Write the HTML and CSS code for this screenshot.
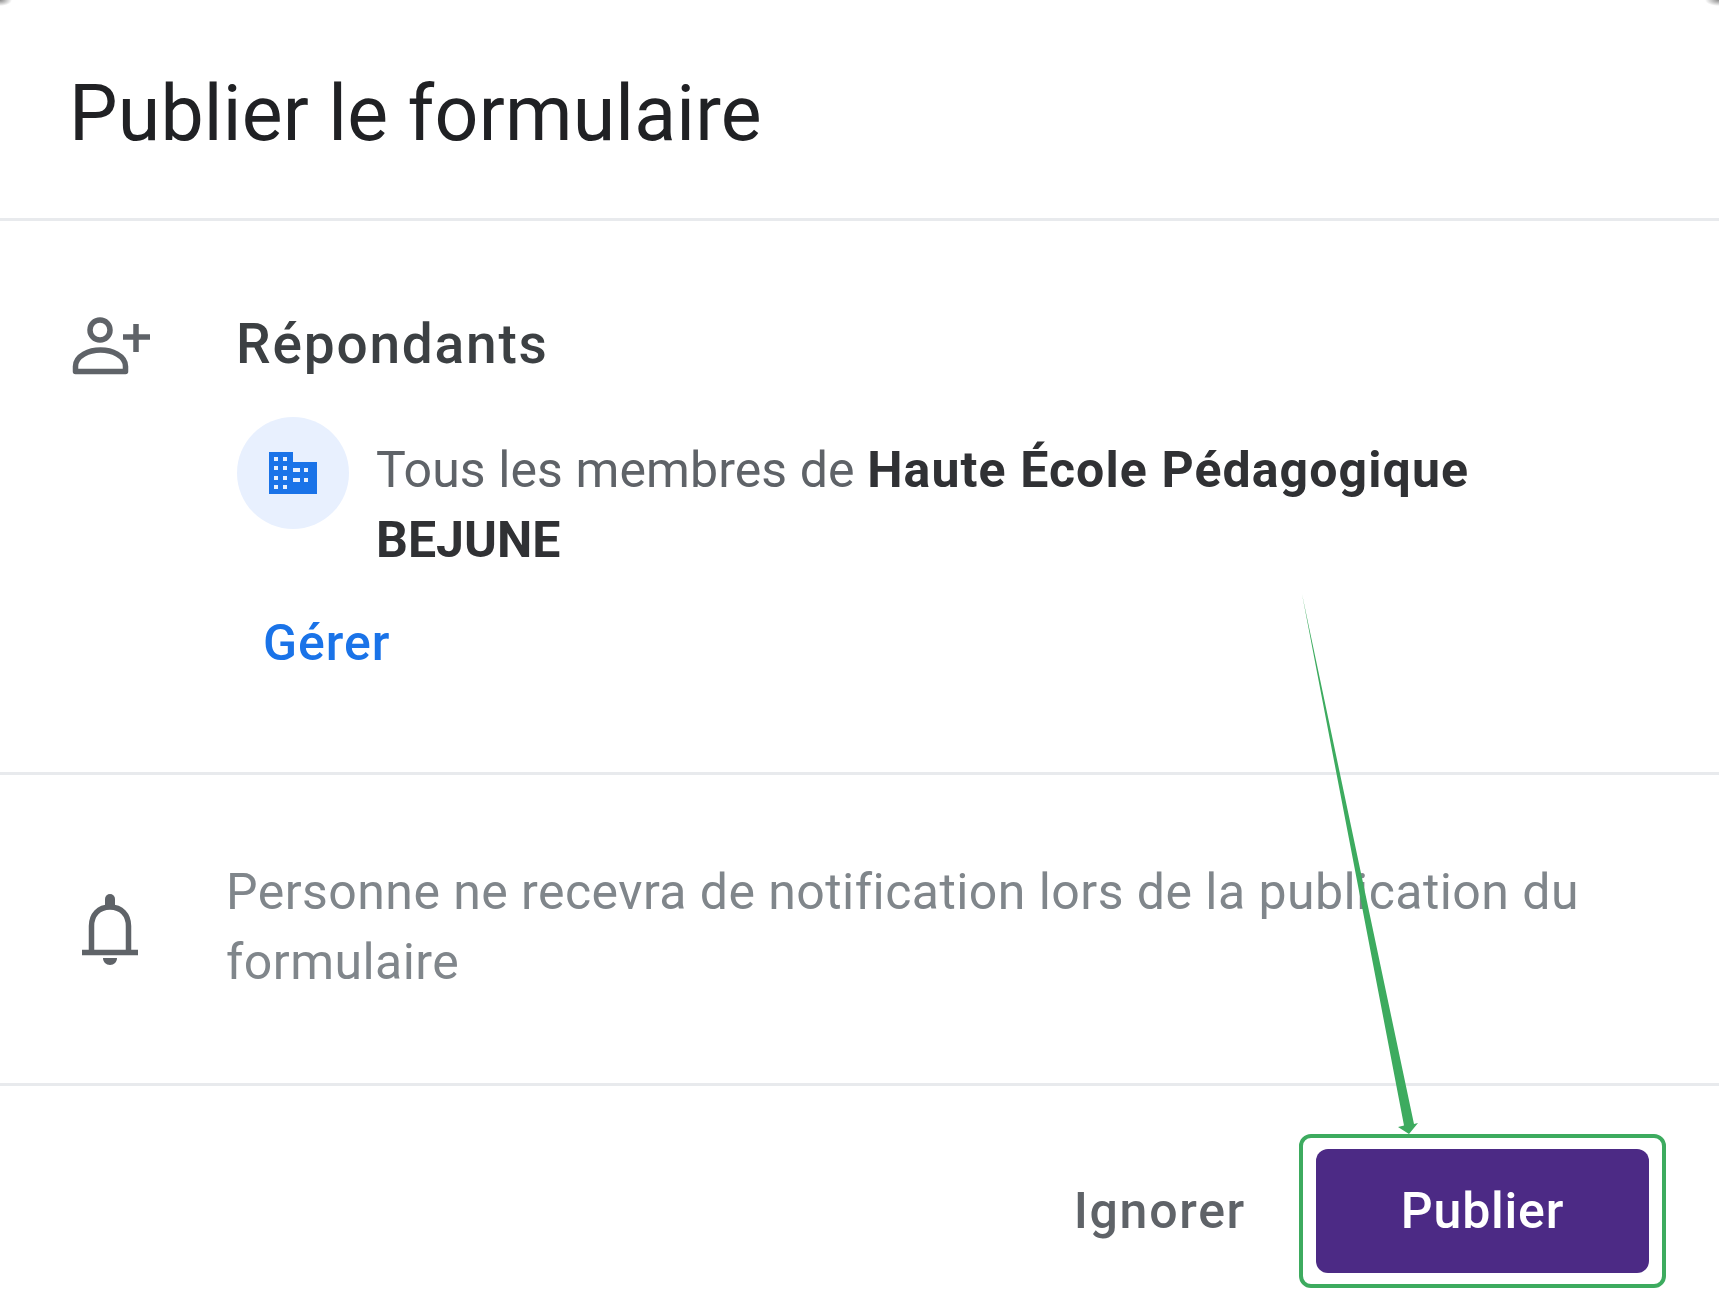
FILE: index.html
```html
<!DOCTYPE html>
<html lang="fr">
<head>
<meta charset="utf-8">
<title>Publier le formulaire</title>
<link rel="stylesheet" href="styles.css">
</head>
<body>
<main class="dialog">
  <header class="head"><h1 class="title">Publier le formulaire</h1></header>
  <section class="responders">
    <svg class="icon-person" viewBox="0 0 78 58" aria-hidden="true">
      <circle cx="28" cy="13" r="10" fill="none" stroke="#5f6368" stroke-width="5.5"/>
      <path d="M3.5 54.5v-5c0-11 14-16.500 25-16.500s25 5.500 25 16.500v5z" fill="none" stroke="#5f6368" stroke-width="5.500" stroke-linejoin="round"/>
      <path d="M51 20h27M64 7v28" fill="none" stroke="#5f6368" stroke-width="5.500"/>
    </svg>
    <div class="resp-body">
      <h2 class="resp-title">Répondants</h2>
      <div class="org">
        <span class="org-badge">
          <svg class="icon-building" viewBox="0 0 48 42" aria-hidden="true">
            <path fill="#1a73e8" d="M0 0h24v10h24v32H0z"/>
            <g fill="#e8f0fe">
              <rect x="5" y="5" width="4" height="4"/><rect x="14" y="5" width="4" height="4"/>
              <rect x="5" y="14" width="4" height="4"/><rect x="14" y="14" width="4" height="4"/>
              <rect x="5" y="24" width="4" height="4"/><rect x="14" y="24" width="4" height="4"/>
              <rect x="5" y="33" width="4" height="4"/><rect x="14" y="33" width="4" height="4"/>
              <rect x="24" y="16" width="7" height="4"/><rect x="24" y="26" width="7" height="4"/>
              <rect x="35" y="16" width="4" height="4"/><rect x="35" y="26" width="4" height="4"/>
            </g>
          </svg>
        </span>
        <p class="org-text">Tous les membres de <strong class="org-name">Haute École Pédagogique</strong> <strong class="org-short">BEJUNE</strong></p>
      </div>
      <a class="manage">Gérer</a>
    </div>
  </section>
  <section class="notify">
    <svg class="icon-bell" viewBox="0 0 56 72" aria-hidden="true">
      <path d="M9.500 58V33c0-11 7-19 18.500-19s18.500 8 18.500 19v25" fill="none" stroke="#5f6368" stroke-width="5.500"/>
      <path d="M0 59.500h56" fill="none" stroke="#5f6368" stroke-width="5.500"/>
      <path d="M23 14V6a5 5 0 0 1 10 0v8z" fill="#5f6368"/>
      <path d="M21 65h14c0 4-3 7-7 7s-7-3-7-7z" fill="#5f6368"/>
    </svg>
    <p class="notify-text">Personne ne recevra de notification lors de la publication du formulaire</p>
  </section>
  <footer class="actions">
    <span class="ignore">Ignorer</span>
    <span class="highlight"><span class="publish">Publier</span></span>
  </footer>
  <svg class="arrow" viewBox="0 0 1719 1314" aria-hidden="true">
    <path fill="#3dab5f" d="M1302 594L1414 1124L1418 1123L1409 1134L1398 1127L1404 1125.500z"/>
  </svg>
</main>
</body>
</html>
```
FILE: styles.css
```css
html, body { margin: 0; padding: 0; background: #fff; }
.dialog {
  position: relative;
  width: 1719px;
  height: 1314px;
  overflow: hidden;
  font-family: Roboto, "Open Sans", sans-serif;
  background:
    radial-gradient(ellipse 12px 6px at 0 0, #8a8a8a, transparent),
    radial-gradient(ellipse 14px 6px at 100% 0, #8a8a8a, transparent),
    #fff;
}
.head, .responders, .notify, .ignore, .publish { filter: blur(0.7px); }
.head {
  box-sizing: border-box;
  height: 221px;
  padding: 0 0 0 69px;
  border-bottom: 3px solid #e8eaed;
  display: flex;
  align-items: center;
}
.title {
  margin: 10px 0 0;
  font-size: 77px;
  font-weight: 400;
  line-height: 90px;
  letter-spacing: 0.2px;
  color: #202124;
}
.responders {
  box-sizing: border-box;
  height: 554px;
  border-bottom: 3px solid #e8eaed;
  padding: 96px 70px 0 72px;
  display: flex;
  align-items: flex-start;
}
.icon-person { width: 78px; height: 58px; flex: none; }
.resp-body { margin-left: 87px; margin-top: -8px; }
.resp-title {
  margin: 0 0 0 -1px;
  font-size: 55px;
  font-weight: 500;
  line-height: 70px;
  letter-spacing: 1.8px;
  color: #3c4043;
}
.org { display: flex; margin-top: 38px; gap: 28px; align-items: flex-start; }
.org-badge {
  width: 112px;
  height: 112px;
  flex: none;
  border-radius: 50%;
  background: #e8f0fe;
  display: flex;
  align-items: center;
  justify-content: center;
}
.icon-building { width: 48px; height: 42px; }
.org-text {
  margin: 18px 0 0 -1px;
  width: 1150px;
  font-size: 50px;
  line-height: 70px;
  letter-spacing: 0.1px;
  color: #5f6368;
}
.org-text strong { font-weight: 700; color: #303134; }
.org-name { letter-spacing: 1.1px; }
.org-short { letter-spacing: 0; }
.manage {
  display: block;
  margin: 33px 0 0 26px;
  font-size: 50px;
  font-weight: 500;
  line-height: 70px;
  letter-spacing: 1px;
  color: #1a73e8;
}
.notify {
  box-sizing: border-box;
  height: 311px;
  border-bottom: 3px solid #e8eaed;
  padding-left: 82px;
  display: flex;
  align-items: center;
}
.icon-bell { width: 56px; height: 72px; flex: none; }
.notify-text {
  margin: 0 0 4px 88px;
  width: 1400px;
  font-size: 50px;
  line-height: 70px;
  letter-spacing: 0.45px;
  color: #80868b;
}
.actions {
  box-sizing: border-box;
  height: 228px;
  padding: 48px 53px 0 0;
  display: flex;
  justify-content: flex-end;
  align-items: flex-start;
}
.ignore {
  margin: 46px 53px 0 0;
  font-size: 50px;
  font-weight: 500;
  line-height: 62px;
  letter-spacing: 1.7px;
  color: #5f6368;
}
.highlight {
  box-sizing: border-box;
  width: 367px;
  height: 154px;
  padding: 11px 13px;
  border: 4px solid #3dab5f;
  border-radius: 12px;
  display: flex;
}
.publish {
  flex: 1;
  border-radius: 12px;
  background: #4c2a85;
  color: #fff;
  font-size: 50px;
  font-weight: 500;
  letter-spacing: 0.8px;
  display: flex;
  align-items: center;
  justify-content: center;
}
.arrow { position: absolute; inset: 0; width: 1719px; height: 1314px; pointer-events: none; }
```
